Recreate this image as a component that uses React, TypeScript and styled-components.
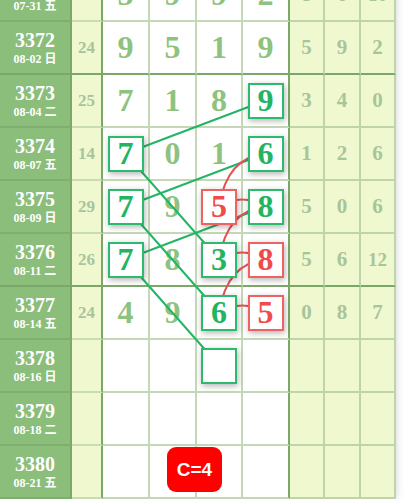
import React from "react";
import styled, { createGlobalStyle } from "styled-components";

const GlobalStyle = createGlobalStyle`
  html, body { margin: 0; padding: 0; background: #ffffff; overflow: hidden; }
  * { box-sizing: border-box; }
`;

const COLS = [72, 31, 47, 47, 46, 47, 35, 36, 35];
const ROW_H = 53;
const DARK = "#7ba869";

const colLeft = (i: number) => COLS.slice(0, i).reduce((a, b) => a + b, 0);
// main column index 0..3 => grid column 2..5
const cx = (c: number) => colLeft(c + 2) + (COLS[c + 2] - 2) / 2;
const cy = (r: number) => ROW_H * r + (ROW_H - 2) / 2;

const Viewport = styled.div`
  width: 404px;
  height: 499px;
  overflow: hidden;
  background: #ffffff;
`;

const Board = styled.div`
  position: relative;
  margin-top: -31px;
  width: ${COLS.reduce((a, b) => a + b, 0)}px;
  box-shadow: 0 0 8px rgba(0, 0, 0, 0.18);
`;

const Grid = styled.div`
  display: grid;
  grid-template-columns: ${COLS.map((c) => `${c}px`).join(" ")};
  grid-auto-rows: ${ROW_H}px;
  font-family: "Liberation Serif", "Times New Roman", serif;
  font-weight: bold;
`;

const BaseCell = styled.div<{ $thick?: boolean }>`
  display: flex;
  align-items: center;
  justify-content: center;
  border-right: 2px solid;
  border-bottom: 2px solid;
`;

const PeriodCell = styled(BaseCell)`
  flex-direction: column;
  background: #8bbd7b;
  border-right-color: ${DARK};
  border-bottom-color: ${(p) => (p.$thick ? DARK : "#7fae6e")};
  color: #ffffff;
  padding-top: 1px;
`;

const PeriodNo = styled.div`
  font-size: 20px;
  line-height: 22px;
`;

const PeriodDate = styled.div`
  font-family: "Liberation Serif", "Noto Sans CJK SC", serif;
  font-size: 12px;
  line-height: 16px;
`;

const SumCell = styled(BaseCell)`
  background: #f0f8d0;
  border-right-color: ${DARK};
  border-bottom-color: ${(p) => (p.$thick ? DARK : "#c9dcb4")};
  color: #a9c49c;
  font-size: 17px;
`;

const MainCell = styled(BaseCell)<{ $edge?: boolean }>`
  background: #ffffff;
  border-right-color: ${(p) => (p.$edge ? DARK : "#c4d8b8")};
  border-bottom-color: ${(p) => (p.$thick ? DARK : "#c4d8b8")};
  color: #8dc37f;
  font-size: 32px;
`;

const TrendCell = styled(BaseCell)<{ $small?: boolean }>`
  background: #f0f8d0;
  border-right-color: #bfd5a9;
  border-bottom-color: ${(p) => (p.$thick ? DARK : "#bfd5a9")};
  color: #a8c59a;
  font-size: ${(p) => (p.$small ? 19 : 21)}px;
`;

const Box = styled.div<{ $tone: "green" | "red" }>`
  position: relative;
  z-index: 2;
  width: 36px;
  height: 36px;
  display: flex;
  align-items: center;
  justify-content: center;
  background: #ffffff;
  border: 2px solid ${(p) => (p.$tone === "red" ? "#ef6262" : "#2cbb6c")};
  color: ${(p) => (p.$tone === "red" ? "#ef4b4b" : "#22b461")};
  font-size: 32px;
  box-shadow: 1px 2px 6px rgba(0, 0, 0, 0.3);
`;

const Overlay = styled.svg`
  position: absolute;
  left: 0;
  top: 0;
  z-index: 1;
  pointer-events: none;
`;

const Badge = styled.div`
  position: absolute;
  z-index: 3;
  left: 167px;
  top: ${ROW_H * 9 + 1}px;
  width: 55px;
  height: 45px;
  border-radius: 9px;
  background: #ff0000;
  color: #ffffff;
  display: flex;
  align-items: center;
  justify-content: center;
  font-family: "Liberation Sans", Arial, sans-serif;
  font-weight: bold;
  font-size: 19px;
`;

type Mark = { v: string; tone: "green" | "red" } | null;
type Row = {
  no: string;
  date: string;
  sum: string;
  main: (string | Mark)[];
  trend: string[];
  thick?: boolean;
};

const G = (v: string): Mark => ({ v, tone: "green" });
const R = (v: string): Mark => ({ v, tone: "red" });

const rows: Row[] = [
  { no: "3371", date: "07-31 五", sum: "27", main: ["5", "9", "9", "2"], trend: ["8", "6", "10"] },
  { no: "3372", date: "08-02 日", sum: "24", main: ["9", "5", "1", "9"], trend: ["5", "9", "2"], thick: true },
  { no: "3373", date: "08-04 二", sum: "25", main: ["7", "1", "8", G("9")], trend: ["3", "4", "0"] },
  { no: "3374", date: "08-07 五", sum: "14", main: [G("7"), "0", "1", G("6")], trend: ["1", "2", "6"] },
  { no: "3375", date: "08-09 日", sum: "29", main: [G("7"), "9", R("5"), G("8")], trend: ["5", "0", "6"] },
  { no: "3376", date: "08-11 二", sum: "26", main: [G("7"), "8", G("3"), R("8")], trend: ["5", "6", "12"], thick: true },
  { no: "3377", date: "08-14 五", sum: "24", main: ["4", "9", G("6"), R("5")], trend: ["0", "8", "7"] },
  { no: "3378", date: "08-16 日", sum: "", main: ["", "", G(""), ""], trend: ["", "", ""] },
  { no: "3379", date: "08-18 二", sum: "", main: ["", "", "", ""], trend: ["", "", ""] },
  { no: "3380", date: "08-21 五", sum: "", main: ["", "", "", ""], trend: ["", "", ""] },
];

const greenLinks: [number, number, number, number][] = [
  [3, 0, 2, 3],
  [3, 0, 5, 2],
  [4, 0, 3, 3],
  [4, 0, 6, 2],
  [5, 0, 4, 3],
  [5, 0, 7, 2],
];

const redArcs: [number, number][] = [
  [3, 4],
  [4, 5],
  [5, 6],
];

const redPairs = [4, 5, 6];

export default function App() {
  const height = ROW_H * rows.length;
  const width = COLS.reduce((a, b) => a + b, 0);
  return (
    <>
      <GlobalStyle />
      <Viewport>
        <Board>
          <Grid>
            {rows.map((row) => (
              <React.Fragment key={row.no}>
                <PeriodCell $thick={row.thick}>
                  <PeriodNo>{row.no}</PeriodNo>
                  <PeriodDate>{row.date}</PeriodDate>
                </PeriodCell>
                <SumCell $thick={row.thick}>{row.sum}</SumCell>
                {row.main.map((m, i) => (
                  <MainCell key={i} $thick={row.thick} $edge={i === 3}>
                    {typeof m === "string" ? m : m ? <Box $tone={m.tone}>{m.v}</Box> : null}
                  </MainCell>
                ))}
                {row.trend.map((t, i) => (
                  <TrendCell key={i} $thick={row.thick} $small={t.length > 1}>
                    {t}
                  </TrendCell>
                ))}
              </React.Fragment>
            ))}
          </Grid>
          <Overlay width={width} height={height} viewBox={`0 0 ${width} ${height}`}>
            {greenLinks.map(([r1, c1, r2, c2], i) => (
              <line
                key={`g${i}`}
                x1={cx(c1)}
                y1={cy(r1)}
                x2={cx(c2)}
                y2={cy(r2)}
                stroke="#22b565"
                strokeWidth={2}
              />
            ))}
            {redArcs.map(([r1, r2], i) => {
              const x0 = cx(3);
              const y0 = cy(r1);
              const x1 = cx(2);
              const y1 = cy(r2);
              return (
                <path
                  key={`a${i}`}
                  d={`M ${x0} ${y0} Q ${x1 + 8} ${y0 + 3.5} ${x1} ${y1}`}
                  fill="none"
                  stroke="#e55353"
                  strokeWidth={2}
                />
              );
            })}
            {redPairs.map((r, i) => {
              const x0 = cx(2);
              const x1 = cx(3);
              const y = cy(r);
              return (
                <path
                  key={`h${i}`}
                  d={`M ${x0} ${y} Q ${(x0 + x1) / 2} ${y - 14} ${x1} ${y}`}
                  fill="none"
                  stroke="#e55353"
                  strokeWidth={2}
                />
              );
            })}
          </Overlay>
          <Badge>C=4</Badge>
        </Board>
      </Viewport>
    </>
  );
}
